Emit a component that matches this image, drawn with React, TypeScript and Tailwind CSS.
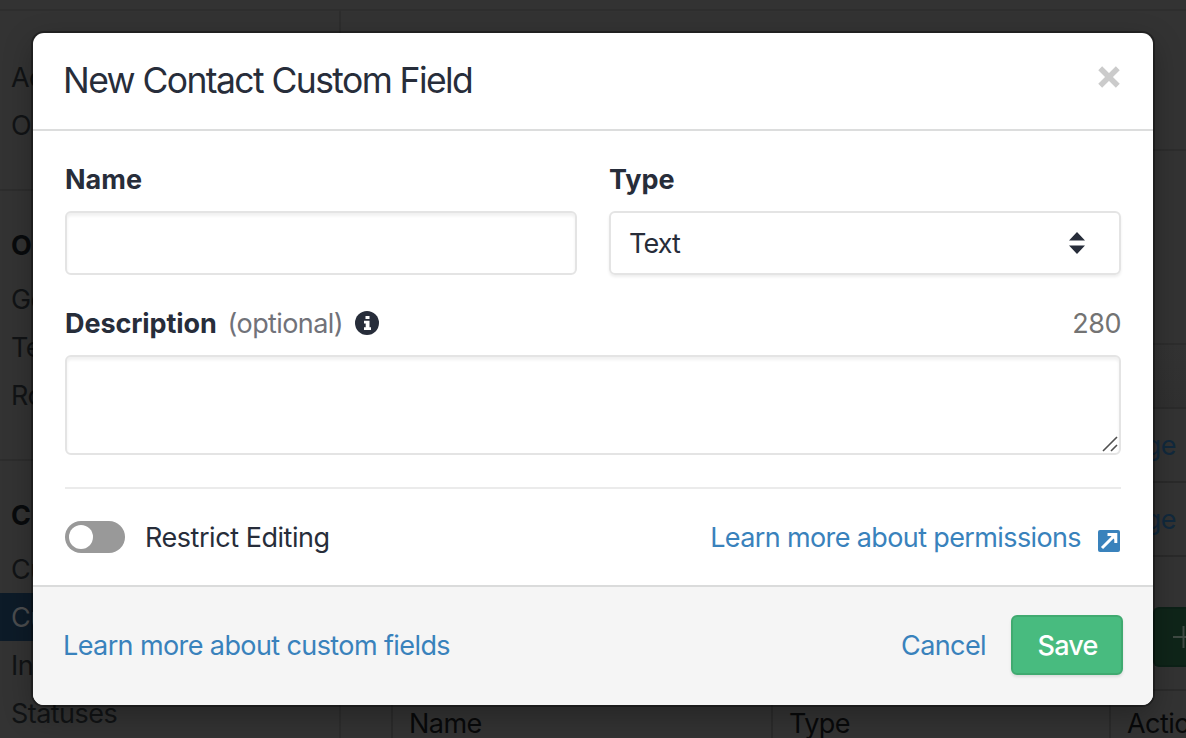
import type { ReactNode } from "react";

function SideLink({ children, active = false }: { children: ReactNode; active?: boolean }) {
  return (
    <div
      className={
        active
          ? "flex h-12 items-center bg-[#0d1b28] pl-[11px] whitespace-nowrap text-[#4b4d4f]"
          : "flex h-12 items-center pl-[11px] whitespace-nowrap"
      }
    >
      {children}
    </div>
  );
}

function SideHeading({ children }: { children: ReactNode }) {
  return <div className="flex h-15 items-center pl-[11px] font-bold whitespace-nowrap text-[#080a0c]">{children}</div>;
}

function Sidebar() {
  return (
    <nav className="flex w-[341px] shrink-0 flex-col overflow-hidden border-r-2 border-[#2d2d2d]">
      <div className="h-[181px] shrink-0 border-b-2 border-[#2d2d2d] pt-[43px]">
        <SideLink>Ac</SideLink>
        <SideLink>O</SideLink>
      </div>
      <div className="h-[270px] shrink-0 border-b-2 border-[#2d2d2d] pt-6">
        <SideHeading>O</SideHeading>
        <SideLink>Ge</SideLink>
        <SideLink>Te</SideLink>
        <SideLink>Ro</SideLink>
      </div>
      <div className="shrink-0 pt-6">
        <SideHeading>C</SideHeading>
        <SideLink>Cu</SideLink>
        <SideLink active>Cu</SideLink>
        <SideLink>In</SideLink>
        <SideLink>Statuses</SideLink>
      </div>
    </nav>
  );
}

function Page() {
  return (
    <div className="flex h-full flex-col bg-[#333333] text-[27px] leading-none tracking-[-0.55px] text-[#111315]">
      <div className="h-[11px] shrink-0 border-b-2 border-[#2e2e2e]" />
      <div className="-mt-px flex min-h-0 grow">
        <Sidebar />
        <main className="flex min-w-0 grow flex-col">
          <div className="h-[141px] shrink-0 border-b-2 border-[#2d2d2d]" />
          <div className="h-[194px] shrink-0 border-b-2 border-[#2d2d2d]" />
          <div className="h-[64px] shrink-0 border-b-2 border-[#2b2b2b] bg-linear-to-b from-[#333333] to-[#303030]" />
          <div className="flex h-[74px] shrink-0 items-center justify-end border-b-2 border-[#2a2a2a] pr-[10px] text-[#11293d]">
            ge
          </div>
          <div className="flex h-[74px] shrink-0 items-center justify-end border-b-2 border-[#2a2a2a] pr-[10px] text-[#11293d]">
            ge
          </div>
          <div className="flex h-[132px] shrink-0 justify-end pt-[50px]">
            <div className="flex h-15 w-[33px] items-center justify-end overflow-hidden rounded-l-md border-2 border-r-0 border-[#0c2117] bg-[#0f2519]">
              <svg viewBox="0 0 13 24" className="h-6 w-[13px]" fill="none" stroke="#3f4a43" strokeWidth="2">
                <path d="M0 12h13M10.5 1v22" />
              </svg>
            </div>
          </div>
          <div className="ml-[50px] grid grow grid-cols-[380px_338px_77px] border-t-2 border-l-2 border-[#2b2b2b] text-[#08090a]">
            <div className="border-r-2 border-[#2b2b2b] pt-[19px] pl-4">Name</div>
            <div className="border-r-2 border-[#2b2b2b] pt-[19px] pl-4">Type</div>
            <div className="overflow-hidden pt-[19px] pl-4">Actio</div>
          </div>
        </main>
      </div>
    </div>
  );
}

function Modal() {
  return (
    <div
      role="dialog"
      className="absolute top-[33px] left-[33px] flex h-[672px] w-[1120px] flex-col overflow-hidden rounded-[11px] bg-white text-[27px] leading-[34px] tracking-[-0.46px] text-[#272d3a] shadow-[0_0_0_2px_rgba(0,0,0,0.3),0_10px_30px_rgba(0,0,0,0.3)]"
    >
      <header className="flex h-[98px] shrink-0 items-center justify-between border-b-2 border-[#dcdddd] pr-[33px] pl-[30px]">
        <h1 className="text-[35.5px] tracking-[-1.6px]">New Contact Custom Field</h1>
        <button aria-label="Close" className="mb-2">
          <svg viewBox="0 0 20 20" className="size-[22px]" stroke="#cbcbcb" strokeWidth="5">
            <path d="M2 2l16 16M18 2L2 18" />
          </svg>
        </button>
      </header>

      <div className="flex grow flex-col px-8 pt-8">
        <div className="grid grid-cols-2 gap-8">
          <div>
            <label className="block h-12 font-bold tracking-[0px]">
              <span>Name</span>
            </label>
            <div className="h-16 rounded-md border-2 border-[#e4e4e4] shadow-[inset_0_3px_3px_rgba(0,0,0,0.06)]" />
          </div>
          <div>
            <label className="block h-12 font-bold tracking-[0px]">
              <span>Type</span>
            </label>
            <div className="flex h-16 items-center justify-between rounded-md border-2 border-[#e4e4e4] pr-[34px] pl-[18px] shadow-[0_2px_3px_rgba(0,0,0,0.07)]">
              <span className="pt-0.5 tracking-[-0.9px]">Text</span>
              <svg viewBox="0 0 16 22" className="h-[22px] w-4" fill="#272d3a">
                <path d="M8 0l8 8.5H0zM8 22l8-8.5H0z" />
              </svg>
            </div>
          </div>
        </div>

        <div className="mt-8 flex h-12">
          <span className="font-bold tracking-[-0.1px]">Description</span>
          <span className="ml-[11px] tracking-[-0.6px] text-[#717279]">(optional)</span>
          <svg viewBox="0 0 24 24" className="mt-1 ml-3 size-6">
            <circle cx="12" cy="12" r="12" fill="#272d3a" />
            <path d="M10.5 5h4v3h-4zM9 9.8h5.5v6.4H16V19H9v-2.8h1.7v-3.6H9z" fill="#fff" />
          </svg>
          <span className="ml-auto text-[#737373]">280</span>
        </div>
        <div className="flex h-25 items-end justify-end rounded-md border-2 border-[#e4e4e4] shadow-[inset_0_3px_3px_rgba(0,0,0,0.06)]">
          <svg viewBox="0 0 16 16" className="mr-px mb-px size-4" fill="none" stroke="#505050" strokeWidth="1.6">
            <path d="M1 15L15 1M9 15l6-6" />
          </svg>
        </div>

        <div className="mt-8 flex h-[98px] items-center border-t-2 border-[#ebebeb]">
          <div className="flex h-8 w-15 items-center rounded-full bg-[#999999] pl-1">
            <div className="size-6 rounded-full bg-white" />
          </div>
          <span className="ml-5 pt-0.5">Restrict Editing</span>
          <a className="ml-auto flex items-center pt-0.5 pr-px tracking-[-0.62px] text-[#3982bc]">
            <span>Learn more about permissions</span>
            <svg viewBox="0 0 22 22" className="mt-1.5 ml-[17px] size-[22px]">
              <rect width="22" height="22" rx="2" fill="#3982bc" />
              <path d="M4 18L15.5 6.5M9.5 4.6h8.3v8.3" fill="none" stroke="#fff" strokeWidth="3" />
              <path d="M11.5 4.5h6v6z" fill="#fff" />
            </svg>
          </a>
        </div>
      </div>

      <footer className="flex h-[120px] shrink-0 items-center border-t-2 border-[#dadbdb] bg-[#f5f5f5] px-[30px] pb-0.5 tracking-[-0.6px] text-[#3982bc]">
        <a className="pt-0.5">Learn more about custom fields</a>
        <a className="ml-auto pt-0.5">Cancel</a>
        <button className="ml-[25px] h-15 w-28 rounded-md border-2 border-[#40aa70] bg-[#48bb7f] pt-0.5 pl-px font-medium tracking-[-0.8px] text-white shadow-[0_2px_3px_rgba(0,0,0,0.1)]">
          Save
        </button>
      </footer>
    </div>
  );
}

export default function App() {
  return (
    <div className="relative h-[738px] w-[1186px] overflow-hidden font-['Inter','Liberation_Sans',sans-serif]">
      <Page />
      <Modal />
    </div>
  );
}
